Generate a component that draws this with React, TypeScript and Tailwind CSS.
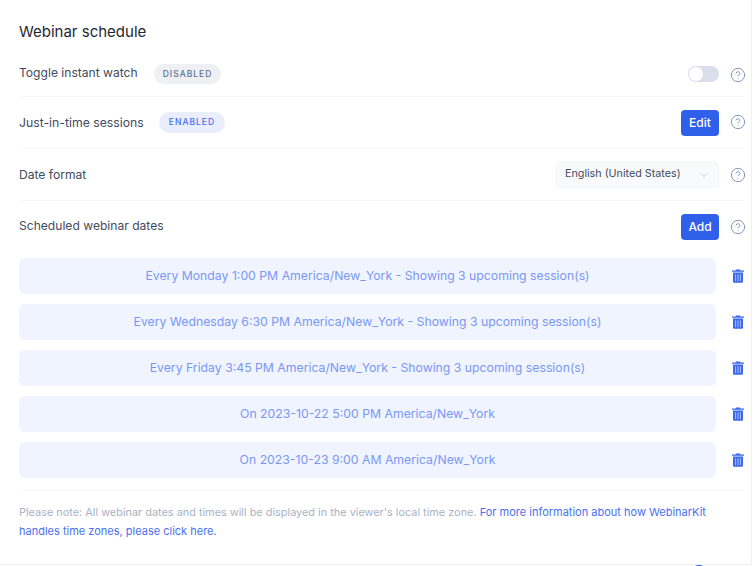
import { ChevronDown, CircleHelp } from "lucide-react";

const sessions = [
  "Every Monday 1:00 PM America/New_York - Showing 3 upcoming session(s)",
  "Every Wednesday 6:30 PM America/New_York - Showing 3 upcoming session(s)",
  "Every Friday 3:45 PM America/New_York - Showing 3 upcoming session(s)",
  "On 2023-10-22 5:00 PM America/New_York",
  "On 2023-10-23 9:00 AM America/New_York",
];

function Help({ className = "" }: { className?: string }) {
  return <CircleHelp className={`h-4 w-4 text-[#8497bd] shrink-0 ${className}`} strokeWidth={1.5} />;
}

function Trash() {
  return (
    <svg viewBox="0 0 12 14" className="ml-[16px] h-[14px] w-[12px] shrink-0">
      <path d="M4 0.4h4l.5 1H12v1.4H0V1.4h3.5z" fill="#3a68ee" />
      <path d="M1 3.6h10v9a1.2 1.2 0 0 1-1.2 1.2H2.2A1.2 1.2 0 0 1 1 12.6z" fill="#3a68ee" />
      <path d="M3.6 5.2v7M6 5.2v7M8.4 5.2v7" stroke="#b9c9fa" strokeWidth="0.9" />
    </svg>
  );
}

export default function App() {
  return (
    <div className="relative h-[566px] w-[754px] overflow-hidden bg-white font-['Inter',sans-serif] text-[#434b5c]">
      <div className="h-[565px] w-[752px] border-r border-b border-[#eef0f3] pl-[19px] pr-[5px]">
        <h2 className="pt-[22px] text-[15px] leading-[20px] text-[#1f2735]">Webinar schedule</h2>

        <div className="mt-[10px] mr-[1px] flex h-[45px] items-center border-b border-[#f5f6f8]">
          <span className="-mt-[2px] text-[12.1px]">Toggle instant watch</span>
          <span className="ml-4 rounded-full bg-[#eef0f4] px-[9px] py-[4px] text-[8.5px] font-medium tracking-[0.12em] text-[#5f6f96]">DISABLED</span>
          <div className="ml-auto -mr-[1px] flex items-center gap-[11px]">
            <div className="h-[16px] w-[31px] rounded-full bg-[#d9dfeb] p-[1px]">
              <div className="h-[14px] w-[14px] rounded-full bg-white" />
            </div>
            <Help className="mt-px" />
          </div>
        </div>

        <div className="mr-[1px] flex h-[52px] items-center border-b border-[#f5f6f8]">
          <span className="mt-px text-[12.25px]">Just-in-time sessions</span>
          <span className="ml-[15px] rounded-full bg-[#e9eefd] px-[10px] py-[4px] text-[8.5px] font-medium tracking-[0.12em] text-[#4a6cf0]">ENABLED</span>
          <div className="ml-auto -mr-[1px] flex items-center gap-[11px]">
            <button className="h-[26px] w-[38px] rounded-[4px] bg-[#3060ea] text-[12px] font-medium text-white">Edit</button>
            <Help className="-mt-px" />
          </div>
        </div>

        <div className="mr-[1px] flex h-[52px] items-center border-b border-[#f5f6f8]">
          <span className="mt-px text-[12.1px]">Date format</span>
          <div className="ml-auto -mr-[1px] flex items-center gap-[11px]">
            <div className="flex h-[26px] w-[163px] items-center justify-between rounded-[4px] border border-[#f3f4f8] bg-[#f9fafc] pl-2 pr-2 text-[10.75px]">
              <span>English (United States)</span>
              <ChevronDown className="h-3 w-3 text-[#c5ccd9]" />
            </div>
            <Help />
          </div>
        </div>

        <div className="flex h-[52px] items-center">
          <span className="-mt-px text-[12.1px]">Scheduled webinar dates</span>
          <div className="ml-auto flex items-center gap-[11px]">
            <button className="-mt-px h-[26px] w-[38px] rounded-[4px] bg-[#3060ea] text-[12px] font-medium text-white">Add</button>
            <Help className="-mt-px" />
          </div>
        </div>

        <div className="mt-[5px] flex flex-col gap-[10px]">
          {sessions.map((s) => (
            <div key={s} className="flex items-center">
              <div className="flex h-[36px] w-[697px] items-center justify-center rounded-[6px] bg-[#f0f4ff] text-[12.25px] text-[#7b97f5]">{s}</div>
              <Trash />
            </div>
          ))}
        </div>

        <div className="mt-[12px] mr-[1px] border-t border-[#f7f7f9] pt-[12px] pr-[1px] text-[10.9px] leading-[19px] text-[#a9b2c4]">
          Please note: All webinar dates and times will be displayed in the viewer's local time zone.{" "}
          <span className="text-[11px] text-[#4a6ff0]">For more information about how WebinarKit handles time zones, please click here.</span>
        </div>
      </div>
      <div className="absolute bottom-[-12px] left-[692px] h-[13px] w-[14px] rounded-full bg-[#3060ea]" />
    </div>
  );
}
